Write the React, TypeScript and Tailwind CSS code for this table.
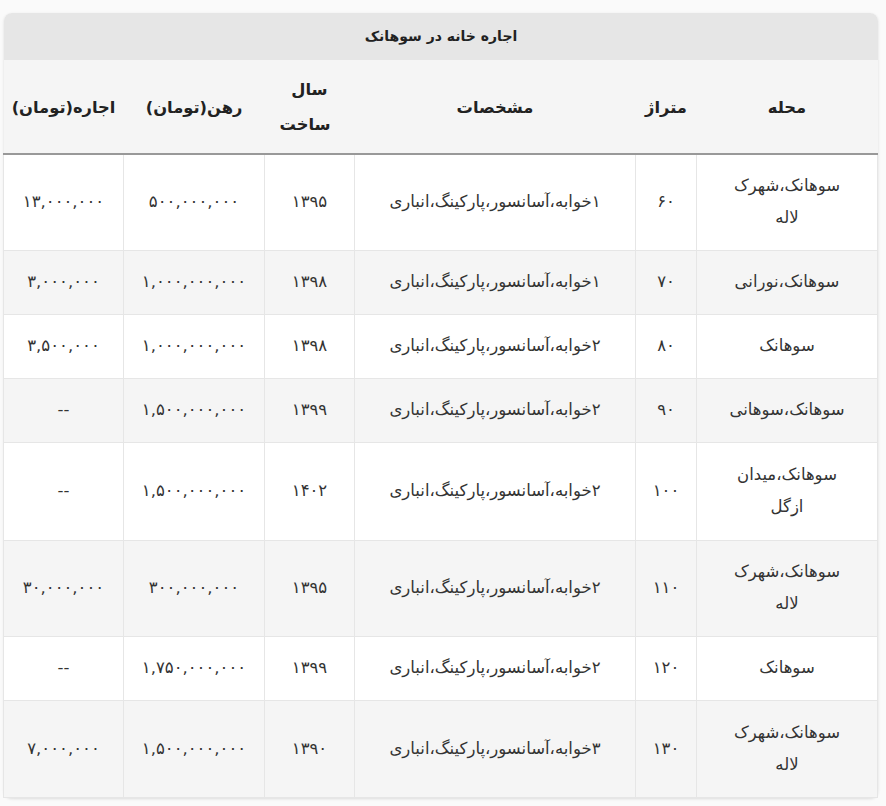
import React from "react";

type Row = {
  h: string;
  area: string[];
  size: string;
  spec: string;
  year: string;
  deposit: string;
  rent: string;
};

const rows: Row[] = [
  { h: "h-[96px]", area: ["سوهانک،شهرک", "لاله"], size: "۶۰", spec: "۱خوابه،آسانسور،پارکینگ،انباری", year: "۱۳۹۵", deposit: "۵۰۰,۰۰۰,۰۰۰", rent: "۱۳,۰۰۰,۰۰۰" },
  { h: "h-[64px]", area: ["سوهانک،نورانی"], size: "۷۰", spec: "۱خوابه،آسانسور،پارکینگ،انباری", year: "۱۳۹۸", deposit: "۱,۰۰۰,۰۰۰,۰۰۰", rent: "۳,۰۰۰,۰۰۰" },
  { h: "h-[64px]", area: ["سوهانک"], size: "۸۰", spec: "۲خوابه،آسانسور،پارکینگ،انباری", year: "۱۳۹۸", deposit: "۱,۰۰۰,۰۰۰,۰۰۰", rent: "۳,۵۰۰,۰۰۰" },
  { h: "h-[64px]", area: ["سوهانک،سوهانی"], size: "۹۰", spec: "۲خوابه،آسانسور،پارکینگ،انباری", year: "۱۳۹۹", deposit: "۱,۵۰۰,۰۰۰,۰۰۰", rent: "--" },
  { h: "h-[98px]", area: ["سوهانک،میدان", "ازگل"], size: "۱۰۰", spec: "۲خوابه،آسانسور،پارکینگ،انباری", year: "۱۴۰۲", deposit: "۱,۵۰۰,۰۰۰,۰۰۰", rent: "--" },
  { h: "h-[96px]", area: ["سوهانک،شهرک", "لاله"], size: "۱۱۰", spec: "۲خوابه،آسانسور،پارکینگ،انباری", year: "۱۳۹۵", deposit: "۳۰۰,۰۰۰,۰۰۰", rent: "۳۰,۰۰۰,۰۰۰" },
  { h: "h-[64px]", area: ["سوهانک"], size: "۱۲۰", spec: "۲خوابه،آسانسور،پارکینگ،انباری", year: "۱۳۹۹", deposit: "۱,۷۵۰,۰۰۰,۰۰۰", rent: "--" },
  { h: "h-[97px]", area: ["سوهانک،شهرک", "لاله"], size: "۱۳۰", spec: "۳خوابه،آسانسور،پارکینگ،انباری", year: "۱۳۹۰", deposit: "۱,۵۰۰,۰۰۰,۰۰۰", rent: "۷,۰۰۰,۰۰۰" },
];

const td = "border border-[#e6e6e6] text-center align-middle px-1 py-0 leading-8";

export default function App() {
  return (
    <div
      className="min-h-[806px] bg-[#fafafa] pt-[13px] text-[#333]"
      style={{ fontFamily: '"DejaVu Sans", "Noto Sans", sans-serif' }}
    >
      <div className="ml-[4px] w-[874px] rounded-lg shadow-[0_1px_3px_rgba(0,0,0,0.12)] bg-white" dir="rtl">
        <div className="h-[47px] rounded-t-lg bg-[#e6e6e6] flex items-center justify-center text-[14px] font-bold text-[#222]">
          اجاره خانه در سوهانک
        </div>
        <table className="w-full table-fixed border-collapse text-[16.5px]">
          <colgroup>
            <col className="w-[181px]" />
            <col className="w-[61px]" />
            <col className="w-[281px]" />
            <col className="w-[90px]" />
            <col className="w-[141px]" />
            <col className="w-[120px]" />
          </colgroup>
          <thead>
            <tr className="bg-[#f5f5f5] border-b-2 border-[#999]">
              {["محله", "متراژ", "مشخصات", "سال ساخت", "رهن(تومان)", "اجاره(تومان)"].map((h, i) => (
                <th
                  key={i}
                  className={`px-1 pt-[12px] pb-[11px] text-center align-middle font-bold text-[16.3px] text-[#222] leading-[35px] ${
                    i === 3 ? "px-6" : ""
                  }`}
                >
                  {h}
                </th>
              ))}
            </tr>
          </thead>
          <tbody>
            {rows.map((r, i) => (
              <tr key={i} className={`${r.h} ${i % 2 === 1 ? "bg-[#f5f5f5]" : "bg-white"}`}>
                <td className={td}>
                  {r.area.map((a, j) => (
                    <div key={j}>{a}</div>
                  ))}
                </td>
                <td className={td}>{r.size}</td>
                <td className={td}>{r.spec}</td>
                <td className={td}>{r.year}</td>
                <td className={td}>{r.deposit}</td>
                <td className={td}>{r.rent}</td>
              </tr>
            ))}
          </tbody>
        </table>
      </div>
    </div>
  );
}
